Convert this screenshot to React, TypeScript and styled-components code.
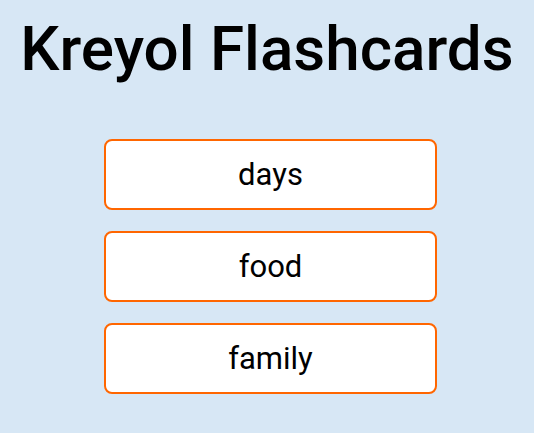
import React from "react";
import styled, { createGlobalStyle } from "styled-components";

const Global = createGlobalStyle`
  html, body { margin: 0; padding: 0; }
  body {
    background: #d7e7f5;
    font-family: Roboto, "Liberation Sans", sans-serif;
    min-height: 433px;
  }
`;

const Page = styled.div`
  display: flex;
  flex-direction: column;
  align-items: center;
  padding-top: 13px;
`;

const Title = styled.h1`
  margin: 0;
  font-size: 62px;
  font-weight: 500;
  line-height: 72px;
  color: #000;
`;

const Deck = styled.div`
  display: flex;
  flex-direction: column;
  gap: 21px;
  margin-top: 54px;
  margin-left: 7px;
  width: 333px;
`;

const DeckButton = styled.button`
  height: 71px;
  background: #fff;
  border: 2px solid #ff6600;
  border-radius: 8px;
  font-family: Roboto, "Liberation Sans", sans-serif;
  font-size: 31px;
  font-weight: 400;
  color: #000;
  cursor: pointer;
`;

const decks = ["days", "food", "family"];

export default function App() {
  return (
    <>
      <Global />
      <Page>
        <Title>Kreyol Flashcards</Title>
        <Deck>
          {decks.map((d) => (
            <DeckButton key={d}>{d}</DeckButton>
          ))}
        </Deck>
      </Page>
    </>
  );
}
